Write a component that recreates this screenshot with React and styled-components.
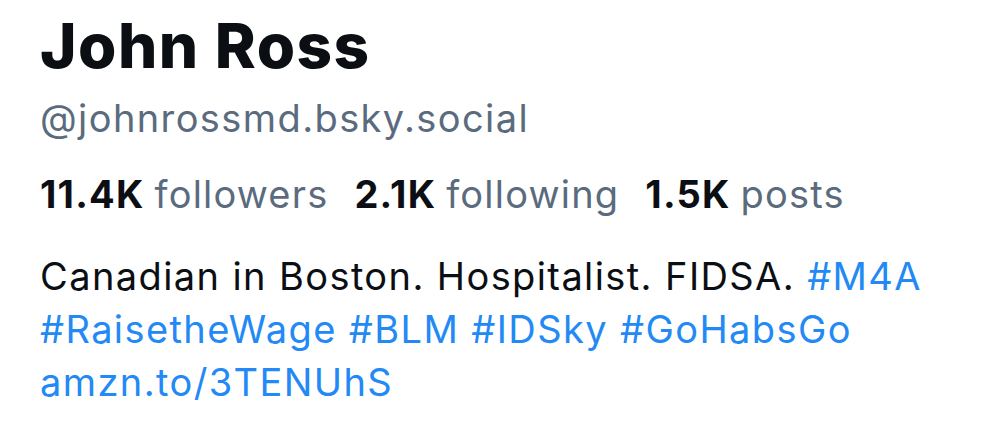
import React from 'react'
import styled, { createGlobalStyle } from 'styled-components'

const GlobalStyle = createGlobalStyle`
  html, body {
    margin: 0;
    padding: 0;
    background: #ffffff;
  }
  body {
    font-family: Inter, "Noto Sans", Roboto, sans-serif;
    -webkit-font-smoothing: antialiased;
  }
`

const Profile = styled.section`
  width: 1000px;
  height: 433px;
  box-sizing: border-box;
  padding: 10px 0 0 40px;
  display: flex;
  flex-direction: column;
  overflow: hidden;
`

const Name = styled.h1`
  margin: 0;
  font-size: 62px;
  font-weight: 800;
  letter-spacing: 1.5px;
  line-height: 72px;
  color: #0b0f14;
`

const Handle = styled.div`
  margin-top: 12px;
  font-size: 38px;
  letter-spacing: 1.4px;
  line-height: 48px;
  color: #5a6b7e;
`

const Stats = styled.div`
  margin-top: 28px;
  display: flex;
  gap: 26px;
  font-size: 38px;
  letter-spacing: 1.2px;
  line-height: 48px;
`

const Stat = styled.span`
  color: #5a6b7e;

  b {
    color: #0b0f14;
    font-weight: 700;
    margin-right: 10px;
  }
`

const Bio = styled.p`
  margin: 32px 0 0;
  font-size: 38px;
  letter-spacing: 1.4px;
  line-height: 53px;
  color: #0b0f14;
  max-width: 940px;
`

const Tag = styled.span`
  color: #2289f5;
`

const stats = [
  { value: '11.4K', label: 'followers' },
  { value: '2.1K', label: 'following' },
  { value: '1.5K', label: 'posts' },
]

const App = () => {
  return (
    <>
      <GlobalStyle />
      <Profile>
        <Name>John Ross</Name>
        <Handle>@johnrossmd.bsky.social</Handle>
        <Stats>
          {stats.map(s => (
            <Stat key={s.label}><b>{s.value}</b>{s.label}</Stat>
          ))}
        </Stats>
        <Bio>
          Canadian in Boston. Hospitalist. FIDSA. <Tag>#M4A</Tag>
          <br />
          <Tag>#RaisetheWage</Tag> <Tag>#BLM</Tag> <Tag>#IDSky</Tag> <Tag>#GoHabsGo</Tag>
          <br />
          <Tag>amzn.to/3TENUhS</Tag>
        </Bio>
      </Profile>
    </>
  )
}

export default App
